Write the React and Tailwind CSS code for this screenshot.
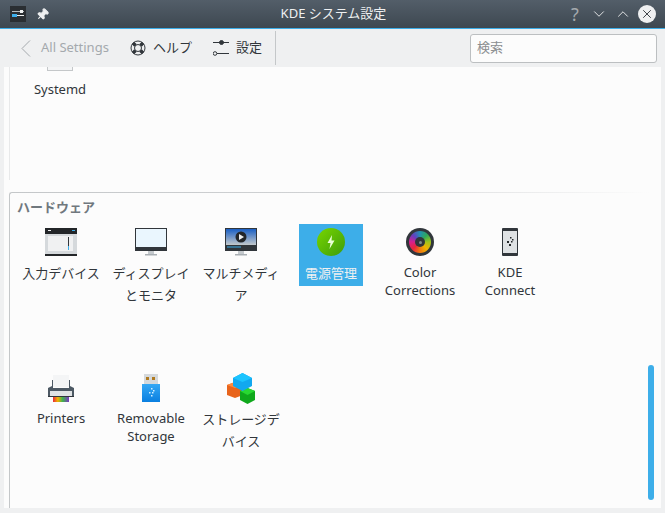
import React from 'react';
import { X, ChevronDown, ChevronUp, Pin } from 'lucide-react';

const font = { fontFamily: '"Noto Sans", "Noto Sans CJK JP", sans-serif' };

const WindowIcon = () => (
  <svg width="16" height="16" viewBox="0 0 16 16" className="ml-[10px]">
    <rect width="16" height="16" fill="#2a2e32" />
    <rect x="2" y="5" width="12" height="1" fill="#b8bcbf" />
    <rect x="10" y="4" width="3" height="3" fill="#eff0f1" />
    <rect x="2" y="9" width="12" height="1" fill="#eff0f1" />
    <rect x="2" y="8" width="5" height="3" fill="#3daee9" />
  </svg>
);

const InputIcon = () => (
  <svg width="32" height="28" viewBox="0 0 32 28">
    <rect width="32" height="28" fill="#d5d9dc" />
    <rect width="32" height="6" fill="#232629" />
    <rect y="26" width="32" height="2" fill="#232629" />
    <rect x="3" y="2" width="3" height="1" fill="#eee" />
    <rect x="27" y="2" width="3" height="1" fill="#3daee9" />
    <rect x="3" y="8" width="25" height="15" fill="#f0f1f2" />
    <rect x="23" y="9" width="1" height="9" fill="#31363b" />
    <rect x="23" y="18" width="1" height="4" fill="#3daee9" />
  </svg>
);

const MonitorIcon = () => (
  <svg width="32" height="28" viewBox="0 0 32 28">
    <rect width="32" height="23" fill="#31363b" />
    <rect x="1" y="1" width="30" height="18" fill="#eaf6fe" />
    <rect x="13" y="23" width="6" height="3" fill="#c4c9cd" />
    <rect x="10" y="26" width="12" height="1.5" fill="#a9afb4" />
  </svg>
);

const MediaIcon = () => (
  <svg width="32" height="28" viewBox="0 0 32 28">
    <defs>
      <linearGradient id="sky" x1="0" y1="0" x2="0" y2="1">
        <stop offset="0" stopColor="#1a5fc4" />
        <stop offset="1" stopColor="#c3c9cc" />
      </linearGradient>
    </defs>
    <rect width="32" height="23" fill="#31363b" />
    <rect x="1" y="1" width="30" height="16" fill="url(#sky)" />
    <circle cx="16" cy="9" r="5.5" fill="#232629" />
    <path d="M14 6 L19 9 L14 12 Z" fill="#eff0f1" />
    <rect x="2" y="18.5" width="14" height="1" fill="#3daee9" />
    <rect x="13" y="23" width="6" height="3" fill="#c4c9cd" />
    <rect x="10" y="26" width="12" height="1.5" fill="#a9afb4" />
  </svg>
);

const PowerIcon = () => (
  <svg width="28" height="28" viewBox="0 0 28 28">
    <defs>
      <linearGradient id="pw" x1="0" y1="0" x2="1" y2="1">
        <stop offset="0" stopColor="#78d600" />
        <stop offset="1" stopColor="#3d9c0c" />
      </linearGradient>
    </defs>
    <circle cx="14" cy="14" r="14" fill="url(#pw)" />
    <path d="M15 7 L10.5 15 L13.5 15 L12.5 21 L17.5 12.5 L14.5 12.5 Z" fill="#eaffd8" />
  </svg>
);

const ColorIcon = () => (
  <div className="w-[28px] h-[28px] rounded-full bg-[#31363b] p-[3px]">
    <div className="w-full h-full rounded-full flex items-center justify-center bg-[conic-gradient(#2090b0,#2fa85a,#9fc41c,#f0b400,#f07a10,#e8263c,#d81f8c,#6040c0,#2090b0)]">
      <div className="w-[10px] h-[10px] rounded-full bg-[#31363b] flex items-center justify-center">
        <div className="w-[3px] h-[3px] rounded-full bg-[#7f8c8d]" />
      </div>
    </div>
  </div>
);

const PhoneIcon = () => (
  <svg width="16" height="28" viewBox="0 0 16 28">
    <rect width="16" height="28" rx="1" fill="#31363b" />
    <rect x="1" y="3" width="14" height="22" fill="#dfe2e4" />
    <g fill="#232629">
      <rect x="8" y="9" width="1.5" height="1.5" />
      <rect x="10" y="11" width="1.5" height="1.5" />
      <rect x="5" y="13" width="2" height="2" />
      <rect x="9" y="13" width="1.5" height="1.5" />
      <rect x="7" y="16" width="2" height="2" />
    </g>
  </svg>
);

const PrinterIcon = () => (
  <svg width="26" height="27" viewBox="0 0 26 27">
    <defs>
      <linearGradient id="rb" x1="0" y1="0" x2="1" y2="0">
        <stop offset="0" stopColor="#e8263c" />
        <stop offset="0.3" stopColor="#f0b400" />
        <stop offset="0.6" stopColor="#3fb34d" />
        <stop offset="1" stopColor="#7b35c4" />
      </linearGradient>
    </defs>
    <rect x="5" y="0" width="16" height="12" fill="#f4f5f6" />
    <path d="M4 5 L5 5 L5 13 L21 13 L21 5 L22 5 L22 11 L26 13 L26 22 L0 22 L0 13 L4 11 Z" fill="#4d5964" />
    <rect x="2" y="16" width="22" height="5" fill="#dfe2e4" />
    <rect x="0" y="21" width="26" height="1" fill="#31363b" />
    <rect x="5" y="22" width="16" height="5" fill="url(#rb)" />
  </svg>
);

const UsbIcon = () => (
  <svg width="18" height="28" viewBox="0 0 18 28">
    <defs>
      <linearGradient id="usb" x1="0" y1="0" x2="0" y2="1">
        <stop offset="0" stopColor="#35a8f5" />
        <stop offset="1" stopColor="#0a7fe0" />
      </linearGradient>
    </defs>
    <rect x="2" y="0" width="14" height="10" fill="#d5d9dc" />
    <rect x="4" y="3" width="3" height="3" fill="#b07a20" />
    <rect x="10" y="3" width="3" height="3" fill="#b07a20" />
    <rect y="10" width="18" height="18" fill="url(#usb)" />
    <g fill="#cfeeff">
      <rect x="9" y="14" width="1.5" height="1.5" />
      <rect x="11" y="16" width="1.5" height="1.5" />
      <rect x="7" y="18" width="1.5" height="1.5" />
      <rect x="10" y="18" width="1.5" height="1.5" />
      <rect x="9" y="21" width="1.5" height="1.5" />
    </g>
  </svg>
);

const BlocksIcon = () => (
  <svg width="28" height="31" viewBox="0 0 28 31">
    <path d="M0 12 L8 9 L16 12 L16 22 L8 25 L0 22 Z" fill="#e8641c" />
    <path d="M0 12 L8 9 L16 12 L8 15 Z" fill="#ff8a3c" />
    <path d="M13 18 L20.5 15 L28 18 L28 27 L20.5 31 L13 27 Z" fill="#0fa81c" />
    <path d="M13 18 L20.5 15 L28 18 L20.5 22 Z" fill="#28d832" />
    <path d="M6 5 L15.5 0 L25 5 L25 13 L15.5 18 L6 13 Z" fill="#12a8f0" />
    <path d="M6 5 L15.5 0 L25 5 L15.5 9 Z" fill="#1cc4ff" />
  </svg>
);

const HelpIcon = () => (
  <svg width="16" height="16" viewBox="0 0 16 16" fill="none" stroke="#31363b">
    <circle cx="8" cy="8" r="7" />
    <circle cx="8" cy="8" r="3.5" />
    <path d="M5.5 5.5 L3 3 M10.5 5.5 L13 3 M5.5 10.5 L3 13 M10.5 10.5 L13 13" strokeWidth="3.5" />
  </svg>
);

const SlidersIcon = () => (
  <svg width="16" height="16" viewBox="0 0 16 16" fill="none" stroke="#31363b">
    <path d="M0 2.5 H16 M4 13.5 H16" />
    <circle cx="8.5" cy="2.5" r="2" fill="#31363b" />
    <circle cx="2" cy="13.5" r="1.8" fill="#eff0f1" />
  </svg>
);

const items = [
  [
    { label: '入力デバイス', icon: <InputIcon />, cjk: true },
    { label: 'ディスプレイとモニタ', icon: <MonitorIcon />, cjk: true },
    { label: 'マルチメディア', icon: <MediaIcon />, cjk: true },
    { label: '電源管理', icon: <PowerIcon />, selected: true, cjk: true },
    { label: 'Color Corrections', icon: <ColorIcon />, shift: true },
    { label: 'KDE Connect', icon: <PhoneIcon /> },
  ],
  [
    { label: 'Printers', icon: <PrinterIcon /> },
    { label: 'Removable Storage', icon: <UsbIcon /> },
    { label: 'ストレージデバイス', icon: <BlocksIcon />, cjk: true },
  ],
];

const Item = ({ label, icon, selected, cjk, shift }) => (
  <div className={`w-[90px] flex flex-col items-center ${shift ? '-ml-[1px]' : ''}`}>
    <div className={`w-fit min-w-[64px] max-w-[82px] flex flex-col items-center px-[6px] ${cjk ? 'pb-[2px]' : 'pb-[1px]'} ${selected ? 'bg-[#3daee9] text-[#eff0f1]' : 'text-[#31363b]'}`}>
      <div className="h-[36px] w-[34px] flex items-center justify-center">{icon}</div>
      <div className={`text-[13px] text-center min-w-[52px] w-max ${cjk ? 'mt-[2px] leading-[22px] max-w-[80px]' : 'mt-[3px] leading-[18px] max-w-[72px]'}`}>{label}</div>
    </div>
  </div>
);

export default function App() {
  return (
    <div className="w-[665px] h-[513px] overflow-hidden bg-[#eff0f1] flex flex-col" style={font}>
      {/* title bar */}
      <div className="h-[29px] shrink-0 flex items-center bg-gradient-to-b from-[#535e69] to-[#3e4851] border-b border-[#3daee9] text-[#eff0f1]">
        <WindowIcon />
        <Pin size={13} className="ml-[10px] rotate-45 fill-[#eff0f1]" />
        <div className="flex-1 text-center text-[13px] pl-[52px]">KDE システム設定</div>
        <div className="flex items-center gap-[6px] pr-[9px]">
          <span className="text-[18px] leading-none text-[#a4a9ad] w-[18px] text-center">?</span>
          <ChevronDown size={18} strokeWidth={1.2} />
          <ChevronUp size={18} strokeWidth={1.2} />
          <div className="w-[18px] h-[18px] rounded-full bg-[#eff0f1] flex items-center justify-center">
            <X size={14} strokeWidth={1.6} className="text-[#31363b]" />
          </div>
        </div>
      </div>

      {/* toolbar */}
      <div className="h-[38px] shrink-0 flex items-center text-[13px] text-[#31363b]">
        <svg width="10" height="17" viewBox="0 0 10 17" fill="none" stroke="#a4a9ad" className="ml-[21px]">
          <path d="M9 0.5 L1 8.5 L9 16.5" />
        </svg>
        <span className="ml-[10px] text-[#a4a9ad]">All Settings</span>
        <span className="ml-[21px]"><HelpIcon /></span>
        <span className="ml-[7px]">ヘルプ</span>
        <span className="ml-[21px]"><SlidersIcon /></span>
        <span className="ml-[7px]">設定</span>
        <div className="ml-[13px] h-[34px] w-px bg-[#c4c7c9]" />
        <div className="ml-[194px] w-[187px] h-[29px] border border-[#bcbfc1] rounded-[3px] bg-[#fcfcfc] flex items-center px-[6px] text-[#8b8e90]">検索</div>
      </div>

      {/* content */}
      <div className="relative mx-[4px] h-[441px] shrink-0 bg-[#fcfcfc] overflow-hidden">
        <div className="ml-[5px] h-[113px] border-l border-[#e8e9ea]">
          <div className="w-[90px] ml-[5px] flex flex-col items-center text-[13px] text-[#31363b]">
            <div className="h-[4px] w-[26px] border border-t-0 border-[#c4c7c9] bg-[#f4f5f6]" />
            <div className="mt-[9px] leading-[18px]">Systemd</div>
          </div>
        </div>
        <div className="ml-[5px] mt-[12px] w-[641px] h-[330px] flex flex-col">
          <div className="h-[4px] shrink-0 flex">
            <div className="w-[4px] h-[4px] border-t border-l border-[#c4c7c9] rounded-tl-[3px]" />
            <div className="flex-1 h-px bg-gradient-to-r from-[#c4c7c9] via-[#d0d2d4] to-transparent" />
          </div>
          <div className="flex-1 border-l border-[#c4c7c9] pl-[6px]">
            <div className="h-[28px] pt-[2px] pl-[1px] text-[13px] leading-[18px] font-bold text-[#70787e]">ハードウェア</div>
            <div className="h-[146px] flex items-start">
              {items[0].map((it) => <Item key={it.label} {...it} />)}
            </div>
            <div className="flex items-start">
              {items[1].map((it) => <Item key={it.label} {...it} />)}
            </div>
          </div>
        </div>
        {/* overlay scrollbar */}
        <div className="absolute left-[644px] top-[298px] w-[6px] h-[135px] rounded-full bg-[#3daee9]" />
      </div>
    </div>
  );
}
